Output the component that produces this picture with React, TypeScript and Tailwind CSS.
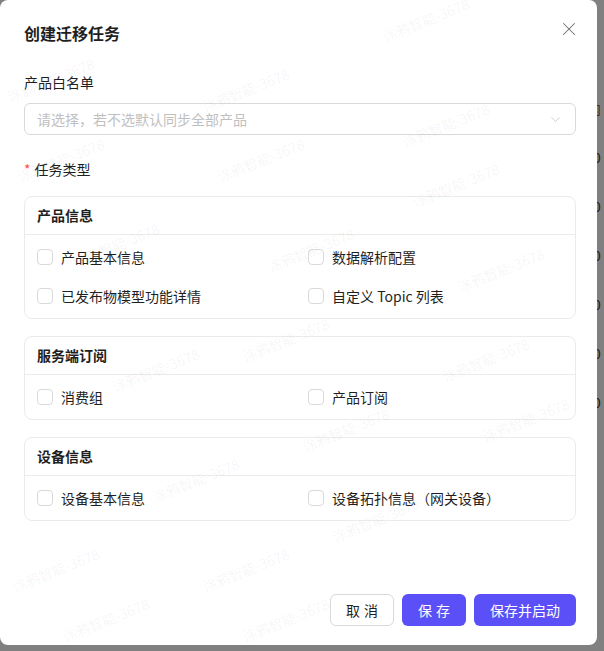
import { X, ChevronDown } from "lucide-react";

const font = { fontFamily: '"Noto Sans CJK SC", "Noto Sans", sans-serif' };

type Group = { title: string; items: string[] };

const groups: Group[] = [
  { title: "产品信息", items: ["产品基本信息", "数据解析配置", "已发布物模型功能详情", "自定义 Topic 列表"] },
  { title: "服务端订阅", items: ["消费组", "产品订阅"] },
  { title: "设备信息", items: ["设备基本信息", "设备拓扑信息（网关设备）"] },
];

const marks = [
  { x: 5, y: 70 }, { x: 380, y: 10 }, { x: 200, y: 80 }, { x: 400, y: 115 },
  { x: 15, y: 150 }, { x: 215, y: 150 }, { x: 410, y: 175 }, { x: 70, y: 235 },
  { x: 265, y: 240 }, { x: 455, y: 260 }, { x: 240, y: 330 }, { x: 440, y: 350 },
  { x: 110, y: 360 }, { x: 300, y: 420 }, { x: 480, y: 410 },
  { x: 150, y: 470 }, { x: 330, y: 510 }, { x: 10, y: 560 },
  { x: 200, y: 560 }, { x: 60, y: 610 }, { x: 240, y: 610 },
];

function Checkbox({ label }: { label: string }) {
  return (
    <label className="flex items-center gap-[8px] h-[22px]">
      <span className="w-[16px] h-[16px] rounded-[4px] border border-[#d9d9d9] bg-white shrink-0" />
      <span className="text-[14px] text-[#1f1f1f]">{label}</span>
    </label>
  );
}

function Card({ group }: { group: Group }) {
  return (
    <div className="border border-[#ebebeb] rounded-[8px]">
      <div className="h-[38px] px-[12px] flex items-center border-b border-[#ebebeb] text-[14px] font-semibold text-[#1f1f1f]">
        {group.title}
      </div>
      <div className="grid grid-cols-2 px-[12px] pt-[11px] pb-[11px] gap-y-[17px]">
        {group.items.map((it, i) => (
          <div key={it} className={i % 2 === 1 ? "pl-[8px]" : ""}>
            <Checkbox label={it} />
          </div>
        ))}
      </div>
    </div>
  );
}

export default function App() {
  return (
    <div className="w-[604px] h-[651px] bg-[#808080] flex overflow-hidden" style={font}>
      <div className="relative w-[597px] h-[645px] bg-white rounded-[8px] shrink-0 overflow-hidden">
        <div className="flex flex-col px-[24px] pt-[20px] h-full">
          <div className="flex items-center justify-between h-[26px]">
            <div className="text-[16px] font-semibold text-[#1f1f1f]">创建迁移任务</div>
            <X size={22} strokeWidth={1.1} className="text-[#6e6e6e] -mr-[7px] -mt-[8px]" />
          </div>

          <div className="mt-[25px] text-[14px] text-[#1f1f1f] h-[22px] flex items-center">产品白名单</div>
          <div className="mt-[10px] h-[32px] w-[552px] border border-[#d9d9d9] rounded-[6px] flex items-center justify-between px-[12px]">
            <span className="text-[14px] text-[#bfbfbf]">请选择，若不选默认同步全部产品</span>
            <ChevronDown size={15} strokeWidth={1.2} className="text-[#bfbfbf]" />
          </div>

          <div className="mt-[23px] text-[14px] text-[#1f1f1f] h-[22px] flex items-center">
            <span className="text-[#ff4d4f] mr-[4px]">*</span>任务类型
          </div>

          <div className="mt-[16px] w-[552px] flex flex-col gap-[17px]">
            {groups.map((g) => (
              <Card key={g.title} group={g} />
            ))}
          </div>

          <div className="mt-auto mb-[19px] flex justify-end gap-[8px] w-[552px]">
            <button className="h-[32px] w-[64px] rounded-[6px] border border-[#d9d9d9] bg-white text-[14px] text-[#1f1f1f] tracking-[4px] pl-[4px]">
              取消
            </button>
            <button className="h-[32px] w-[64px] rounded-[6px] bg-[#5b50f7] text-[14px] text-white tracking-[4px] pl-[4px]">
              保存
            </button>
            <button className="h-[32px] w-[102px] rounded-[6px] bg-[#5b50f7] text-[14px] text-white">
              保存并启动
            </button>
          </div>
        </div>

        {marks.map((m, i) => (
          <span
            key={i}
            aria-hidden
            className="absolute pointer-events-none text-[14px] text-black/[0.05] whitespace-nowrap -rotate-[22deg]"
            style={{ left: m.x, top: m.y }}
          >
            涂鸦智能-3678
          </span>
        ))}
      </div>

      <div className="flex flex-col w-[7px] pt-[100px] gap-[32px] text-[14px] text-[#222]">
        {["▯", "0", "0", "0", "0", "0", "0"].map((t, i) => (
          <div key={i} className="h-[17px] leading-[17px] overflow-hidden -ml-[4px]">{t}</div>
        ))}
      </div>
    </div>
  );
}
